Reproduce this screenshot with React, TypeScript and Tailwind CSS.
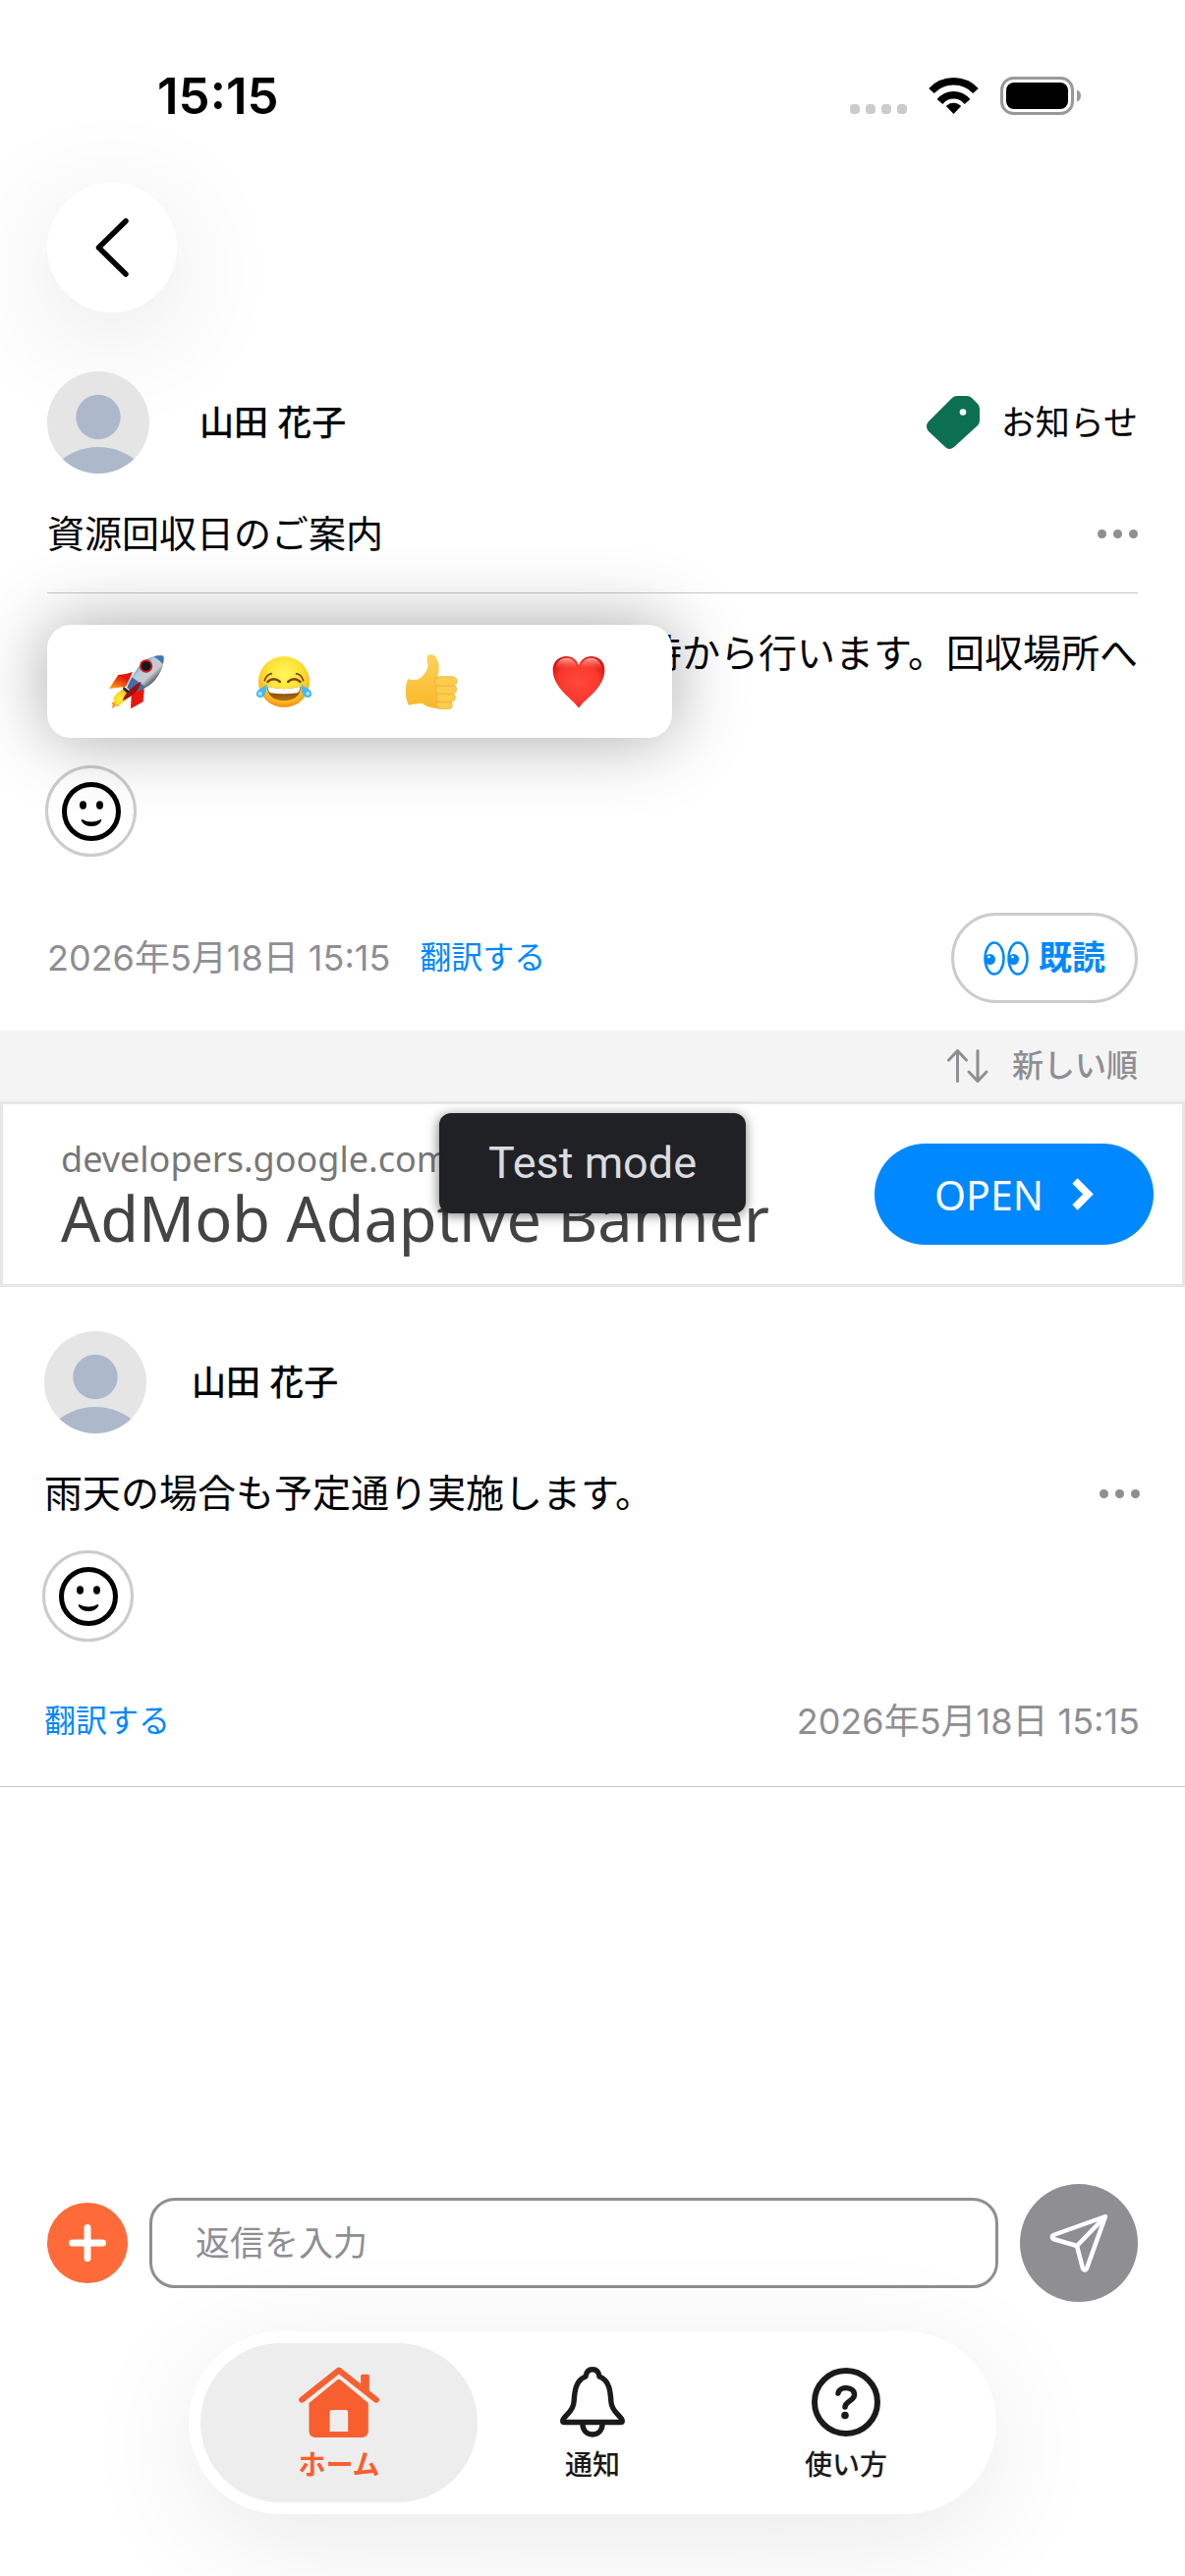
import React from "react";

interface IconProps {
  className?: string;
}

interface ReplyPost {
  id: number;
  author: string;
  body: string;
  date: string;
}

const REPLIES: ReplyPost[] = [
  { id: 1, author: "山田 花子", body: "雨天の場合も予定通り実施します。", date: "2026年5月18日 15:15" },
];

// Status bar icons
const WifiIcon: React.FC<IconProps> = ({ className }) => (
  <svg className={className} viewBox="0 0 51 38" fill="none" stroke="#000">
    <path d="M3 14.5C15 1.5 36 1.5 48 14.5" strokeWidth="7.5" />
    <path d="M11.5 25.5C19 16.5 32 16.5 39.500 25.5" strokeWidth="7.5" />
    <path d="M17.800 30C22 25.500 29 25.500 33.200 30L25.500 38Z" fill="#000" stroke="none" />
  </svg>
);

const BatteryIcon: React.FC<IconProps> = ({ className }) => (
  <svg className={className} viewBox="0 0 82 40">
    <rect x="1.500" y="1.500" width="72" height="36" rx="12" fill="none" stroke="#999" strokeWidth="3" />
    <rect x="6" y="6" width="63" height="27" rx="8" fill="#000" />
    <path d="M78 13.500Q82 15 82 19.500Q82 24 78 25.500Z" fill="#999" />
  </svg>
);

// Post icons
const Avatar: React.FC = () => (
  <svg className="size-[104px] shrink-0 rounded-full" viewBox="0 0 104 104">
    <rect width="104" height="104" fill="#e5e5e5" />
    <circle cx="52" cy="46.500" r="22.700" fill="#adb8cb" />
    <circle cx="52" cy="138" r="61" fill="#adb8cb" />
  </svg>
);

const TagIcon: React.FC<IconProps> = ({ className }) => (
  <svg className={className} viewBox="0 0 54 54">
    <path
      d="M31 0H41Q44 0 46 2L52 8Q54 10 54 13V25Q54 28 52 30L28 52Q23 56 19 52L2 36Q-2 31 2 26L26 2Q28 0 31 0Z"
      fill="#0c6f50"
    />
    <circle cx="37" cy="16.500" r="3.300" fill="#fff" />
  </svg>
);

const SmileIcon: React.FC<IconProps> = ({ className }) => (
  <svg className={className} viewBox="0 0 60 60">
    <circle cx="30" cy="30" r="27.500" fill="none" stroke="#000" strokeWidth="5" />
    <ellipse cx="21.500" cy="23.500" rx="3.500" ry="4.200" />
    <ellipse cx="38.500" cy="23.500" rx="3.500" ry="4.200" />
    <path d="M20.500 38Q30 43 39.500 38Q41 38.500 40 40Q37 45 30 45Q23 45 20 40Q19 38.500 20.500 38Z" />
  </svg>
);

const EyesIcon: React.FC<IconProps> = ({ className }) => (
  <svg className={className} viewBox="0 0 46 35" fill="none" stroke="#0088ff" strokeWidth="2.500">
    {[0, 24].map(x => (
      <g key={x}>
        <ellipse cx={x + 11} cy="17.500" rx="9.500" ry="16" />
        <ellipse cx={x + 6.5} cy="18.500" rx="5.500" ry="5.500" fill="#0088ff" stroke="none" />
        <circle cx={x + 5.5} cy="16" r="1.300" fill="#fff" stroke="none" />
      </g>
    ))}
  </svg>
);

const SortIcon: React.FC<IconProps> = ({ className }) => (
  <svg className={className} viewBox="0 0 42 34" fill="none" stroke="#8e8e93" strokeWidth="3" strokeLinecap="round" strokeLinejoin="round">
    <path d="M10.500 32.500V2M1.500 11L10.500 1.500L19.500 11" />
    <path d="M31 1.500V32M22 23L31 32.500L40 23" />
  </svg>
);

const SendIcon: React.FC<IconProps> = ({ className }) => (
  <svg className={className} viewBox="0 0 60 60" fill="none" stroke="#fff" strokeWidth="4.500" strokeLinecap="round" strokeLinejoin="round">
    <path d="M57 3L4 22Q1.500 24 4 26L28 33L34 56Q36 59 38 56Z" />
    <path d="M28 33L56 4" />
  </svg>
);

// Tab icons
const HomeIcon: React.FC<IconProps> = ({ className }) => (
  <svg className={className} viewBox="0 0 245 216" fill="#f85f2f">
    <path d="M9 101L122 11L236 101" fill="none" stroke="#f85f2f" strokeWidth="18" strokeLinecap="round" strokeLinejoin="round" />
    <path d="M189 28Q189 23 194 23H210Q215 23 215 28V88L189 67Z" />
    <path
      fillRule="evenodd"
      d="M116 41Q122 36 128 41L212 111V196Q212 216 192 216H51Q31 216 31 196V111ZM100 132Q94 132 94 138V198H150V138Q150 132 144 132Z"
    />
  </svg>
);

const BellIcon: React.FC<IconProps> = ({ className }) => (
  <svg className={className} viewBox="0 0 196 214" fill="none" stroke="#1a1a1a" strokeWidth="16" strokeLinejoin="round">
    <path d="M77 30C79 15 87 8 98 8C109 8 117 15 119 30C150 42 152 75 154 104C155 140 188 148 188 164Q188 168 183 168H13Q8 168 8 164C8 148 41 140 42 104C44 75 46 42 77 30Z" />
    <path d="M68 172C68 191 79 205 98 205C117 205 128 191 128 172" />
  </svg>
);

const HelpIcon: React.FC<IconProps> = ({ className }) => (
  <svg className={className} viewBox="0 0 70 70" fill="none" stroke="#1a1a1a" strokeWidth="6" strokeLinecap="round">
    <circle cx="35" cy="35" r="32" />
    <path d="M27 26C28 18.500 44 18.500 43.500 28C43 34 34 34 34 40" strokeWidth="5.500" />
    <circle cx="34" cy="48.500" r="3.800" fill="#1a1a1a" stroke="none" />
  </svg>
);

// Reactions
const RocketEmoji: React.FC = () => (
  <svg className="size-14" viewBox="0 0 168 168">
    <defs>
      <linearGradient id="rocket-body" x1="0.200" y1="0.200" x2="0.750" y2="0.800">
        <stop offset="0" stopColor="#3f76b0" />
        <stop offset="0.350" stopColor="#b9cbd9" />
        <stop offset="0.650" stopColor="#c9cdcf" />
        <stop offset="1" stopColor="#2b2f33" />
      </linearGradient>
      <linearGradient id="rocket-fin" x1="0.800" y1="0" x2="0.200" y2="1">
        <stop offset="0.300" stopColor="#e6140a" />
        <stop offset="1" stopColor="#ff9c12" />
      </linearGradient>
      <radialGradient id="rocket-flame">
        <stop offset="0" stopColor="#fff23c" />
        <stop offset="0.700" stopColor="#ffd21f" />
        <stop offset="1" stopColor="#f58a14" />
      </radialGradient>
    </defs>
    <path d="M72 54Q50 62 28 63L0 105L52 98Z" fill="url(#rocket-fin)" />
    <path d="M103 92L107 112L104 145L66 166L68 125Z" fill="#e8170c" />
    <path d="M52 104C32 108 16 124 13 137L17 142L7 151L12 154L8 166L22 157L26 161L38 150C50 146 58 132 63 118Z" fill="url(#rocket-flame)" />
    <path d="M166 5C148 0 112 8 90 38C74 60 61 84 55 102L72 116C96 110 126 98 144 74C161 50 171 25 166 5Z" fill="url(#rocket-body)" />
    <path d="M70 70C64 80 58 92 55 102L72 116C84 113 98 109 113 101Z" fill="#3d70a8" />
    <path d="M166 5C156 2 144 4 136 7Q155 18 164 30Q169 16 166 5Z" fill="#3f78b5" />
    <circle cx="113" cy="36" r="20" fill="#d41a1f" />
    <circle cx="113" cy="36" r="14.500" fill="#16191c" />
    <path d="M98 83C76 94 48 117 41 142C68 130 92 112 98 83Z" fill="#9c0f12" />
    <path d="M44 98L62 112L56 120L42 106Z" fill="#20272e" />
  </svg>
);

const JoyEmoji: React.FC = () => (
  <svg className="size-14" viewBox="0 0 168 168">
    <defs>
      <radialGradient id="joy-face" cx="0.500" cy="0.350" r="0.650">
        <stop offset="0" stopColor="#fff75a" />
        <stop offset="0.550" stopColor="#ffe032" />
        <stop offset="0.850" stopColor="#fdb51c" />
        <stop offset="1" stopColor="#f08c12" />
      </radialGradient>
      <linearGradient id="joy-mouth" x1="0" y1="0" x2="0" y2="1">
        <stop offset="0" stopColor="#6b3508" />
        <stop offset="1" stopColor="#b07414" />
      </linearGradient>
    </defs>
    <circle cx="84" cy="84" r="78" fill="url(#joy-face)" />
    <g fill="none" stroke="#7a4408" strokeWidth="5" strokeLinecap="round">
      <path d="M25 80Q30 62 46 59" />
      <path d="M143 80Q138 62 122 59" />
      <path d="M34 84Q53 68 72 84" strokeWidth="7" />
      <path d="M96 84Q115 68 134 84" strokeWidth="7" />
    </g>
    <path d="M34 99Q84 112 134 99C136 126 114 142 84 142C54 142 32 126 34 99Z" fill="url(#joy-mouth)" />
    <path d="M35 99Q84 112 133 99Q133 112 126 118Q84 124 42 118Q35 112 35 99Z" fill="#fff" />
    <path d="M31 90C33 110 28 132 12 132C-4 132 -3 116 6 108C14 102 24 100 31 90Z" fill="#45b9f7" />
    <path d="M137 90C135 110 140 132 156 132C172 132 171 116 162 108C154 102 144 100 137 90Z" fill="#45b9f7" />
    <ellipse cx="11" cy="120" rx="6" ry="6" fill="#a8e3ff" />
    <ellipse cx="157" cy="120" rx="6" ry="6" fill="#a8e3ff" />
  </svg>
);

const ThumbEmoji: React.FC = () => (
  <svg className="size-14" viewBox="-5 0 168 168">
    <defs>
      <linearGradient id="thumb-skin" x1="0" y1="0" x2="0" y2="1">
        <stop offset="0" stopColor="#ffd259" />
        <stop offset="1" stopColor="#f9b729" />
      </linearGradient>
    </defs>
    <path
      d="M66 8C70 -3 88 -1 94 10C104 28 104 46 98 68L110 75V160L138 166C100 168 68 164 50 149Q32 150 10 155C-2 135 -2 100 7 76Q20 80 36 77C54 70 64 52 68 38C70 28 64 18 66 8Z"
      fill="url(#thumb-skin)"
    />
    <g fill="#ffcd4d" stroke="#e5a52c" strokeWidth="2">
      <rect x="95" y="143" width="48" height="24" rx="12" />
      <rect x="94" y="118" width="58" height="27" rx="13" />
      <rect x="92" y="93" width="64" height="28" rx="14" />
      <rect x="90" y="68" width="67" height="28" rx="14" />
    </g>
  </svg>
);

const HeartEmoji: React.FC = () => (
  <svg className="size-14" viewBox="-5 -4 168 168">
    <defs>
      <radialGradient id="heart-fill" cx="0.500" cy="0.500" r="0.600">
        <stop offset="0" stopColor="#ff4a3a" />
        <stop offset="0.650" stopColor="#f9372c" />
        <stop offset="1" stopColor="#d01010" />
      </radialGradient>
      <linearGradient id="heart-shine" x1="0" y1="0" x2="0" y2="1">
        <stop offset="0" stopColor="#ffb3a8" />
        <stop offset="1" stopColor="#ff4a3a" stopOpacity="0" />
      </linearGradient>
    </defs>
    <path
      d="M79 160C62 132 0 100 0 43C0 18 18 2 42 2C60 2 74 14 79 30C84 14 98 2 116 2C140 2 158 18 158 43C158 100 96 132 79 160Z"
      fill="url(#heart-fill)"
    />
    <path d="M8 44C8 20 24 7 42 7C58 7 70 18 74 38Q40 30 8 44Z" fill="url(#heart-shine)" />
    <path d="M150 44C150 20 134 7 116 7C100 7 88 18 84 38Q118 30 150 44Z" fill="url(#heart-shine)" />
  </svg>
);

const REACTIONS = [
  { name: "rocket", Emoji: RocketEmoji },
  { name: "joy", Emoji: JoyEmoji },
  { name: "thumbsup", Emoji: ThumbEmoji },
  { name: "heart", Emoji: HeartEmoji },
];

const StatusBar: React.FC = () => (
  <div className="flex items-center justify-between pt-16 pr-[106px] pl-40">
    <span className="text-[51px] leading-[68px] font-semibold">15:15</span>
    <div className="flex items-end gap-[22px]">
      <div className="flex gap-[6px] pb-0.5">
        {[0, 1, 2, 3].map(i => (
          <span key={i} className="size-[10px] rounded-[4px] bg-[#cbcbcb]" />
        ))}
      </div>
      <WifiIcon className="h-10 w-[51px] pb-0.5" />
      <BatteryIcon className="h-10 w-[82px]" />
    </div>
  </div>
);

const MoreButton: React.FC = () => (
  <button aria-label="more" className="flex h-14 items-center gap-[7px]">
    {[0, 1, 2].map(i => (
      <span key={i} className="size-[9px] rounded-full bg-[#8e8e93]" />
    ))}
  </button>
);

const ReactionButton: React.FC = () => (
  <button
    aria-label="reaction"
    className="-ml-0.5 flex size-[93px] items-center justify-center rounded-full border-[3px] border-[#cccccc] bg-white"
  >
    <SmileIcon className="size-[60px]" />
  </button>
);

const ReactionPicker: React.FC = () => (
  <div className="absolute bottom-full left-0 z-10 mb-7 grid h-[115px] w-[636px] grid-cols-4 rounded-[24px] bg-white pr-5 pl-4 shadow-[0_0_72px_rgba(0,0,0,0.35)]">
    {REACTIONS.map(({ name, Emoji }) => (
      <button key={name} aria-label={name} className="flex items-center justify-center">
        <Emoji />
      </button>
    ))}
  </div>
);

const MainPost: React.FC = () => (
  <article className="px-12 pt-[60px] pb-7">
    <div className="flex items-center justify-between">
      <div className="flex items-center gap-[51px]">
        <Avatar />
        <span className="text-[35px] leading-[56px] font-medium">山田 花子</span>
      </div>
      <div className="flex items-center gap-[22px]">
        <TagIcon className="size-[54px]" />
        <span className="text-[35px] leading-[56px]">お知らせ</span>
      </div>
    </div>
    <div className="mt-[33px] flex items-center justify-between border-b border-[#c6c6c8] pb-8">
      <h1 className="text-[38px] leading-[56px]">資源回収日のご案内</h1>
      <MoreButton />
    </div>
    <p className="mt-[33px] text-right text-[39px] leading-[56px]">時から行います。回収場所へ</p>
    <div className="relative mt-[86px]">
      <ReactionPicker />
      <ReactionButton />
    </div>
    <div className="mt-[57px] flex items-center justify-between text-[#8e8e93]">
      <div className="flex items-center gap-[30px]">
        <time className="text-[36px] leading-[48px]">2026年5月18日 15:15</time>
        <button className="text-[32px] leading-[48px] text-[#0088ff]">翻訳する</button>
      </div>
      <button className="flex h-[92px] items-center gap-[10px] rounded-full border-[3px] border-[#cccccc] px-[30px] text-[34px] leading-[48px] font-bold text-[#0088ff]">
        <EyesIcon className="h-[35px] w-[46px]" />
        既読
      </button>
    </div>
  </article>
);

const SortBar: React.FC = () => (
  <div className="flex h-[72px] items-center justify-end bg-[#f4f4f4] px-12">
    <button className="flex items-center gap-6 text-[32px] leading-[48px] font-medium text-[#8e8e93]">
      <SortIcon className="h-[34px] w-[42px]" />
      新しい順
    </button>
  </div>
);

const AdBanner: React.FC = () => (
  <aside className="relative flex items-center justify-between border-[3px] border-[#e5e6e8] py-8 pr-[29px] pl-[59px] font-['Noto_Sans',sans-serif]">
    <div>
      <p className="text-[36px] leading-[48px] text-[#777777]">developers.google.com</p>
      <p className="text-[63px] leading-[71px] text-[#444444]">AdMob Adaptive Banner</p>
    </div>
    <span className="absolute top-[9px] left-1/2 flex h-[102px] -translate-x-1/2 items-center rounded-[12px] bg-[#202124] px-[50px] font-['Roboto',sans-serif] text-[45px] leading-[56px] whitespace-nowrap text-[#dadce0] shadow-[0_2px_12px_rgba(0,0,0,0.5)]">
      Test mode
    </span>
    <button className="flex h-[103px] w-[284px] items-center justify-center gap-[29px] rounded-full bg-[#0088ff] text-[41px] leading-[56px] text-white">
      OPEN
      <svg className="h-[33px] w-[22px]" viewBox="0 0 22 33" fill="none" stroke="#fff" strokeWidth="7.500">
        <path d="M3 3L16.500 16.500L3 30" />
      </svg>
    </button>
  </aside>
);

const Reply: React.FC<{ reply: ReplyPost }> = ({ reply }) => (
  <article className="border-b border-[#c6c6c8] pt-[45px] pr-[46px] pb-[42px] pl-[45px]">
    <div className="flex items-center gap-[46px]">
      <Avatar />
      <span className="text-[35px] leading-[56px] font-medium">{reply.author}</span>
    </div>
    <div className="mt-[33px] flex items-center justify-between">
      <p className="text-[39px] leading-[56px]">{reply.body}</p>
      <MoreButton />
    </div>
    <div className="mt-[30px]">
      <ReactionButton />
    </div>
    <div className="mt-[57px] flex items-center justify-between">
      <button className="text-[32px] leading-[48px] text-[#0088ff]">翻訳する</button>
      <time className="text-[36px] leading-[48px] text-[#8e8e93]">{reply.date}</time>
    </div>
  </article>
);

const ReplyForm: React.FC = () => (
  <form className="flex items-center gap-[22px] px-12">
    <button type="button" aria-label="add" className="flex size-[82px] shrink-0 items-center justify-center rounded-full bg-[#ff6b38]">
      <svg className="size-[38px]" viewBox="0 0 38 38" stroke="#fff" strokeWidth="7" strokeLinecap="round">
        <path d="M19 3.500V34.500M3.500 19H34.500" />
      </svg>
    </button>
    <input
      type="text"
      aria-label="返信を入力"
      placeholder="返信を入力"
      className="h-[92px] min-w-0 flex-1 rounded-[26px] border-[3px] border-[#8e8e93] bg-white px-11 text-[35px] leading-[48px] placeholder:text-[#8e8e93]"
    />
    <button type="button" aria-label="send" className="flex size-[120px] shrink-0 items-center justify-center rounded-full bg-[#8e8e93]">
      <SendIcon className="size-[60px]" />
    </button>
  </form>
);

const TABS = [
  { label: "ホーム", href: "#home", icon: <HomeIcon className="h-[72px] w-[82px]" />, active: true },
  { label: "通知", href: "#notifications", icon: <BellIcon className="h-[72px] w-[66px]" />, active: false },
  { label: "使い方", href: "#help", icon: <HelpIcon className="size-[70px]" />, active: false },
];

const TabBar: React.FC = () => (
  <nav className="mx-auto mt-[30px] mb-[63px] flex -space-x-6 rounded-full bg-white p-3 shadow-[0_24px_120px_rgba(0,0,0,0.09)]">
    {TABS.map(tab => (
      <a
        key={tab.label}
        href={tab.href}
        className={`flex h-[162px] w-[282px] flex-col items-center rounded-full pt-6 text-[28px] leading-10 ${
          tab.active ? "bg-[#ededed] font-bold text-[#f85f2f]" : "font-medium text-[#1a1a1a]"
        }`}
      >
        <span className="flex h-[72px] items-center">{tab.icon}</span>
        <span className="mt-2">{tab.label}</span>
      </a>
    ))}
  </nav>
);

export default function App() {
  return (
    <div className="flex min-h-screen flex-col overflow-hidden bg-white font-['Inter','Noto_Sans_CJK_JP',sans-serif] text-black">
      <StatusBar />
      <header className="px-12 pt-[54px]">
        <button
          aria-label="back"
          className="flex size-[132px] items-center justify-center rounded-full bg-white shadow-[0_24px_120px_rgba(0,0,0,0.11)]"
        >
          <svg className="h-[60px] w-[34px]" viewBox="0 0 34 60" fill="none" stroke="#000" strokeWidth="5.500" strokeLinecap="round" strokeLinejoin="round">
            <path d="M31 3L3.500 30L31 57" />
          </svg>
        </button>
      </header>
      <main className="flex-1">
        <MainPost />
        <SortBar />
        <AdBanner />
        {REPLIES.map(reply => (
          <Reply key={reply.id} reply={reply} />
        ))}
      </main>
      <ReplyForm />
      <TabBar />
    </div>
  );
}
